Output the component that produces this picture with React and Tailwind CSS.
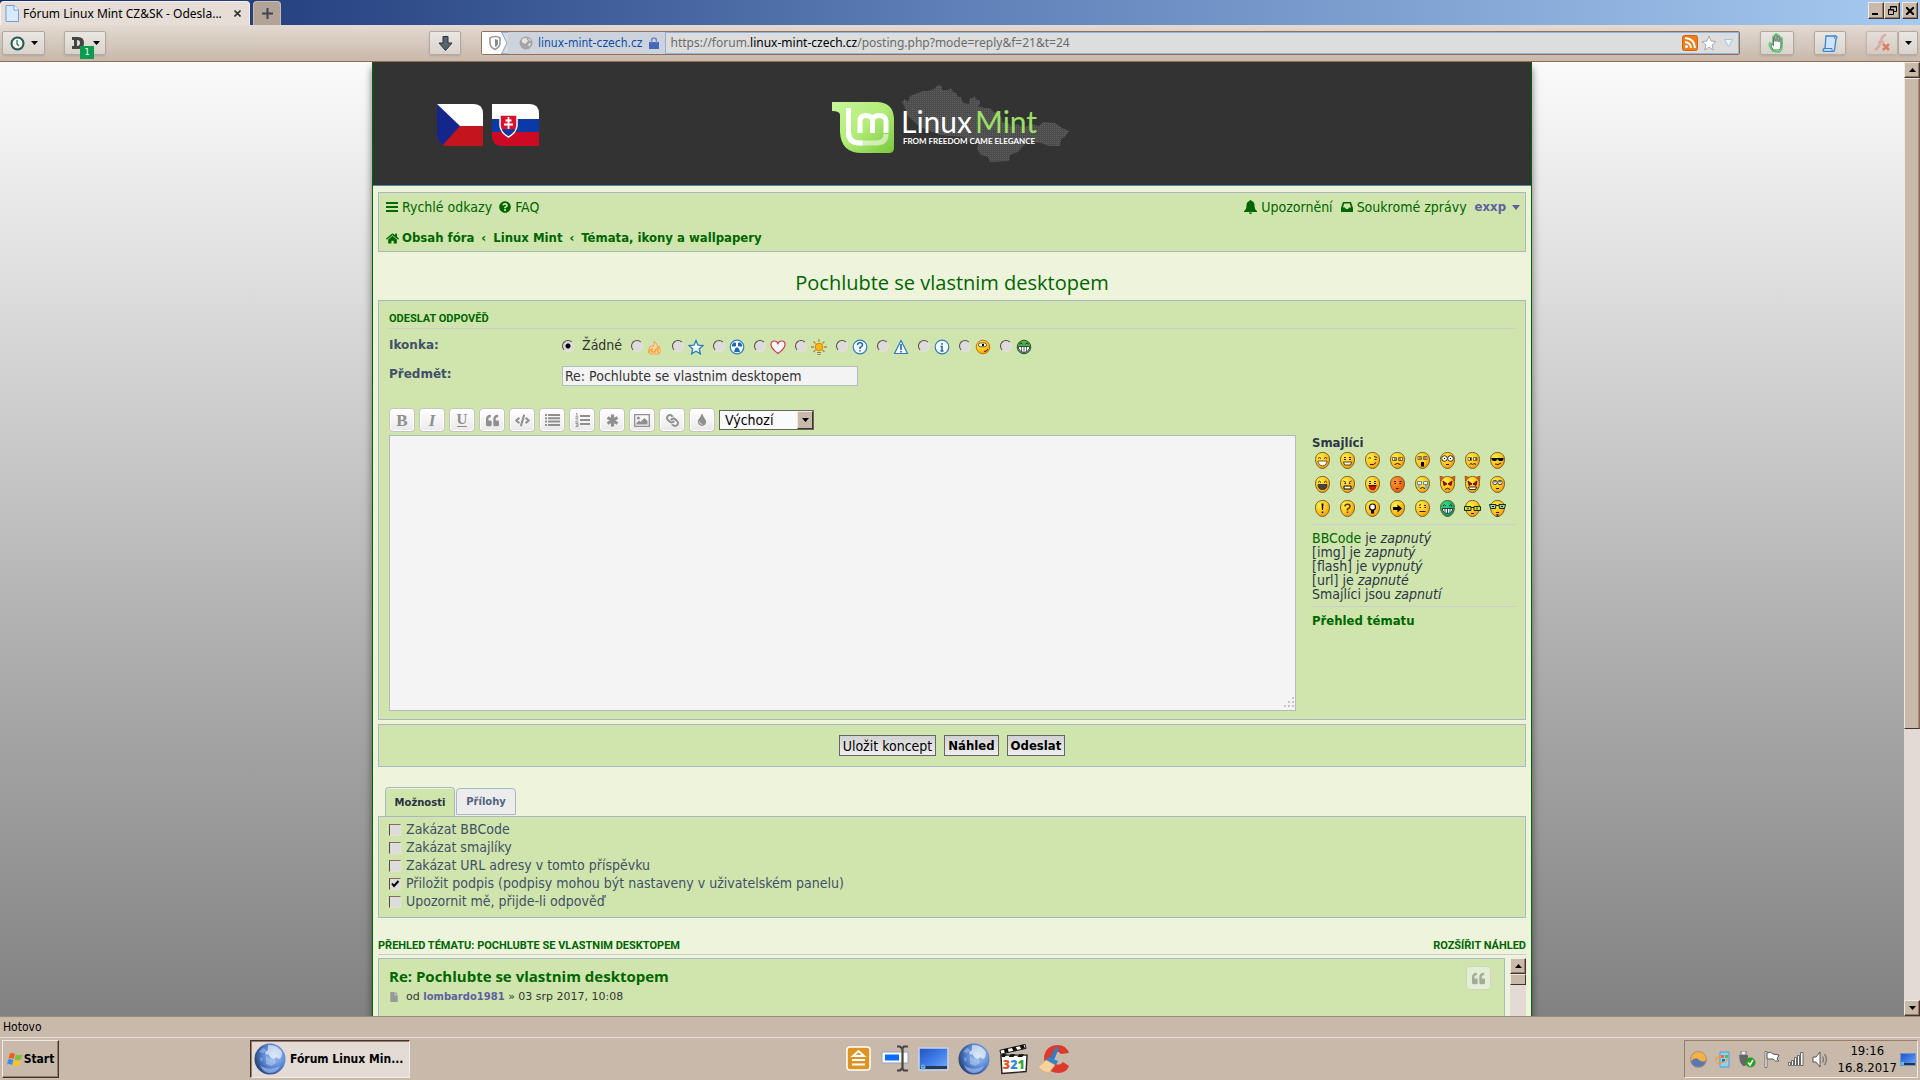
import { useState } from "react";
import { FaQuestionCircle, FaHome, FaQuoteLeft, FaCode, FaLink, FaTint, FaFile } from "react-icons/fa";

const TAHOMA = "font-['DejaVu_Sans_Condensed','DejaVu_Sans',sans-serif]";

const FORMAT_BUTTONS = [
  { name: "Tučné", icon: <b className="font-['Liberation_Serif',serif] text-[17px] leading-none">B</b> },
  { name: "Kurzíva", icon: <b className="font-['Liberation_Serif',serif] text-[17px] italic leading-none">I</b> },
  { name: "Podtržené", icon: <b className="border-b border-current font-['Liberation_Serif',serif] text-[15px] leading-[13px]">U</b> },
  { name: "Citace", icon: <FaQuoteLeft size={13} /> },
  { name: "Kód", icon: <FaCode size={15} /> },
  {
    name: "Seznam",
    icon: <svg width="15" height="12" viewBox="0 0 15 12"><path d="M0 0h2v2H0zM3 0h12v2H3zM0 3.300h2v2H0zM3 3.300h12v2H3zM0 6.600h2v2H0zM3 6.600h12v2H3zM0 10h2v2H0zM3 10h12v2H3z" fill="currentColor" /></svg>
  },
  {
    name: "Číslovaný seznam",
    icon: <svg width="15" height="14" viewBox="0 0 15 14"><path d="M5 2h10v2H5zM5 6h10v2H5zM5 10h10v2H5z" fill="currentColor" /><path d="M1 .500h1V4M.500 4h3M.500 5.500h2v1.500L.500 9h3M.500 10.500h2.500v3H.500M1 12h2" fill="none" stroke="currentColor" strokeWidth=".9" /></svg>
  },
  {
    name: "Položka seznamu",
    icon: <svg width="13" height="13" viewBox="0 0 13 13"><path d="M6.500 .500v12M1.500 3.500l10 6M11.500 3.500l-10 6" stroke="currentColor" strokeWidth="3.200" /></svg>
  },
  {
    name: "Obrázek",
    icon: <svg width="16" height="13" viewBox="0 0 16 13"><path d="M.700 .700h14.600v11.600H.700z" fill="none" stroke="currentColor" strokeWidth="1.300" /><circle cx="4.300" cy="4" r="1.500" fill="currentColor" /><path d="M2.500 10.500V9l2.500-2.500 1.500 1.500L10.500 4 13.500 7v3.500z" fill="currentColor" /></svg>
  },
  { name: "Odkaz", icon: <FaLink size={13} className="rotate-90" /> },
  { name: "Barva písma", icon: <FaTint size={12} /> }
];

const OPTIONS = [
  { id: "bbcode", label: "Zakázat BBCode" },
  { id: "smilies", label: "Zakázat smajlíky" },
  { id: "urls", label: "Zakázat URL adresy v tomto příspěvku" },
  { id: "sig", label: "Přiložit podpis (podpisy mohou být nastaveny v uživatelském panelu)", checked: true },
  { id: "notify", label: "Upozornit mě, přijde-li odpověď" }
];

const STATUS = [
  ["[img] je", "zapnutý"],
  ["[flash] je", "vypnutý"],
  ["[url] je", "zapnuté"],
  ["Smajlíci jsou", "zapnutí"]
];

const K = { fill: "none", stroke: "#2a1a00", strokeWidth: 1 };

// Facial features, drawn on a 15x17 face
const FEATURES = {
  grin: <><path {...K} d="M3 6.500Q4.500 4.500 6 6.500M9 6.500Q10.500 4.500 12 6.500" /><path d="M3 9h9v1q-1 4-4.500 4T3 10z" fill="#fff" stroke="#2a1a00" strokeWidth=".7" /></>,
  smile: <><path {...K} d="M4 5.500h2M9 5.500h2M4 7.500h2M9 7.500h2" /><path d="M3.500 10h8l-1 3h-6z" fill="#fff" stroke="#2a1a00" strokeWidth=".8" /></>,
  wink: <><path {...K} d="M3.500 6.500Q5 4.500 6 6.500M9 4.500l3 1M9.500 7.500h2M5 12.500q4 1 6-2" /></>,
  sad: <><path d="M2.500 5.500h4v3h-4zM8.500 5.500h4v3h-4z" fill="#fff" stroke="#6b4a10" strokeWidth=".8" /><path {...K} d="M5 6v2.500M10 6v2.500M4.500 12.500q3-2 6 0" /></>,
  shock: <><path d="M3 4.500h3.500v3H3zM8.500 4.500H12v3H8.500z" fill="#fff" stroke="#6b4a10" strokeWidth=".8" /><path {...K} d="M5 5v2M10 5v2" /><path d="M6 10h3v4.500H6z" fill="#000" /></>,
  eek: <><circle cx="4.500" cy="6.500" r="2.800" fill="#fff" stroke="#000" strokeWidth=".8" /><circle cx="10.500" cy="6.500" r="2.800" fill="#fff" stroke="#000" strokeWidth=".8" /><path d="M4 6h1v1H4zM10 6h1v1h-1z" /><path {...K} d="M6 12.500h3" /></>,
  confused: <><path d="M3 5.500h3.500v3H3zM8.500 5.500H12v3H8.500z" fill="#fff" stroke="#6b4a10" strokeWidth=".8" /><path d="M5 6h1v2H5zM10.500 6h1v2h-1z" /><path {...K} d="M4.500 12.500l1.500-1 1.500 1 1.500-1 2 1" /></>,
  cool: <><path d="M1.500 6h12v1.500l-1.500 1.500H9L8 7.500H7L6 9H3L1.500 7.500z" /><path {...K} d="M5 12q3 1.500 6-1" /></>,
  lol: <><path {...K} d="M3 6.500Q4.500 4 6 6.500M9 6.500Q10.500 4 12 6.500" /><path d="M3 8.500h9q0 5-4.500 5T3 8.500z" fill="#444" stroke="#2a1a00" strokeWidth=".7" /></>,
  mad: <><path {...K} d="M3.500 5l2.500 1.500M11.500 5L9 6.500M4.500 7.500h1.500M9 7.500h1.500" /><path d="M4 10h7v3H4z" fill="#fff" stroke="#000" /></>,
  razz: <><path {...K} d="M4 5.500h2M9 5.500h2M4 7.500h2M9 7.500h2M3.500 9.500h8" /><path d="M4 10h7q-.500 4-3.500 4T4 10z" fill="#e21212" stroke="#5a0000" strokeWidth=".6" /></>,
  red: <><path {...K} d="M4 5.500h2M9.500 5.500h2M4.500 7.500h1.500M9.500 7.500h1.500M6 12.500h2.500" /></>,
  cry: <><path d="M2.500 5.500h4v3h-4zM8.500 5.500h4v3h-4z" fill="#dff1ff" stroke="#4d7890" strokeWidth=".8" /><path d="M3 9h1.500v3H3zM10.500 9h2v4h-2z" fill="#63b4e8" /><path {...K} d="M5 12.500q2.500-2 5 0" /></>,
  evil: <><path d="M3 5l4 3-3 1.500zM12 5L8 8l3 1.500z" fill="#d00" stroke="#300" strokeWidth=".8" /><path {...K} d="M5 13.500q2.500-2.500 5 0" /></>,
  twisted: <><path d="M3 5l4 3-3 1.500zM12 5L8 8l3 1.500z" fill="#d00" stroke="#300" strokeWidth=".8" /><path d="M3.500 11h8l-1 2.500h-6z" fill="#fff" stroke="#000" strokeWidth=".8" /></>,
  roll: <><circle cx="5" cy="6.500" r="2.200" fill="#fff" stroke="#000" strokeWidth=".7" /><circle cx="10" cy="6.500" r="2.200" fill="#fff" stroke="#000" strokeWidth=".7" /><path d="M4.500 5h1v1.500h-1zM9.500 5h1v1.500h-1z" /><path {...K} d="M6 12.500h3" /></>,
  exclaim: <path d="M6.500 3.500h2L8 10H7zM6.700 11.500h1.600V13H6.700z" />,
  question: <><path d="M5 6.500Q5 4.300 7.500 4.300T10 6.500Q10 8 7.500 9v1.500" fill="none" stroke="#5a3c00" strokeWidth="1.600" /><path d="M6.700 11.500h1.600V13H6.700z" fill="#5a3c00" /></>,
  idea: <><circle cx="7.500" cy="7" r="3" fill="#fff" stroke="#000" strokeWidth="1.200" /><path d="M6 10h3v3.500H6z" /></>,
  arrow: <path d="M3 7h4.500V4.500l4.500 4-4.500 4V10H3z" />,
  neutral: <><path {...K} d="M4 5.500l2-1M9 5.500h2M4.500 7.500h1.500M9.500 7.500h1.500M4.500 11.500h6" /></>,
  green: <><path d="M3 6Q4.500 3.500 6 6M9 6Q10.500 3.500 12 6" fill="none" stroke="#022" /><path d="M2.500 8.500h10v1.500q-1 3.500-5 3.500T2.500 10z" fill="#fff" stroke="#022" strokeWidth=".8" /><path d="M5 8.500v4M7.500 8.500v5M10 8.500v4" stroke="#022" strokeWidth=".8" /></>,
  geek: <><path d="M-.500 6.500h6.500v4h-6.500zM9 6.500h6.500v4H9z" fill="#bfe04a" stroke="#1d2a00" /><path {...K} d="M6 7.500h3M3 7.500v2M12 7.500v2M6 13.500h3" /></>,
  ugeek: <><path d="M-.500 4.500h6.500l-.500 4h-5zM9 4.500h6.500l-1 4h-5z" fill="#9bd3b4" stroke="#0b2a1c" /><path {...K} d="M6 5.500h3M2 6.500h2M11 6.500h2M6 12.500h3" /><path d="M6.500 14h2v3h-2z" fill="#4a3a1a" /></>
};

const SMILIES = Object.keys(FEATURES);

function Smiley({ kind }) {
  const fill = kind === "green" ? "url(#faceGreen)" : kind === "red" ? "url(#faceRed)" : "url(#faceYellow)";
  const horns = kind === "evil" || kind === "twisted";
  return (
    <svg width="19" height="17" viewBox="-2 0 19 17">
      <path d="M7.500 .500C12 .500 14.500 3.500 14.500 7.500 14.500 12 11.500 16.500 7.500 16.500S.500 12 .500 7.500C.500 3.500 3 .500 7.500 .500z" fill={fill} stroke="#6d5320" strokeWidth=".9" />
      {horns && <path d="M0 0l4 1.500L.500 5zM15 0l-4 1.500L14.500 5z" fill="#e8641c" stroke="#7a3000" strokeWidth=".6" />}
      {FEATURES[kind]}
    </svg>
  );
}

const TOPIC_ICONS = {
  fire: <><path d="M2 10q0-3 3-3 1 0 1 1 2-3 1-6 4 3 3.500 6l1.500-1q3 5 0 8H3Q1 13 2 10z" fill="#fbd9a8" stroke="#f2a04e" /><path d="M2 14q0-3 3-4v3h3q0-3 3-4-1 3 1 5" fill="none" stroke="#f4a63c" strokeWidth="1.500" /></>,
  star: <path d="M8 1.500l2 4.700 5 .400-3.800 3.300 1.200 5L8 12.200l-4.400 2.700 1.200-5L1 6.600l5-.400z" fill="#f4faff" stroke="#2f7cc4" strokeWidth="1.300" />,
  nuke: <><circle cx="8" cy="8" r="6.800" fill="#f4faff" stroke="#2f7cc4" strokeWidth="1.200" /><path d="M4.500 4h2v3h-3.500zM9.500 4h2l1.500 3H9.500zM7 9h2l1.500 3.500h-5z" fill="#1d68b0" stroke="#1d68b0" /></>,
  heart: <path d="M8 14.500Q1 9.500 1 5.500 1 2 4.300 2 7 2 8 4.500 9 2 11.700 2 15 2 15 5.500q0 4-7 9z" fill="#fff4f6" stroke="#c43a5a" strokeWidth="1.200" />,
  sun: <><path d="M8 0v3M0 8h3M13 8h3M2.500 2.500l2 2M13.500 2.500l-2 2M2.500 13l2-2M13.500 13l-2-2" stroke="#b08a3a" strokeWidth="1.300" /><circle cx="8" cy="8" r="3.800" fill="#ffb516" stroke="#d98300" /><path d="M6 13.500h4M6.500 15.500h3" stroke="#8c7a5a" /></>,
  ask: <><circle cx="8" cy="8" r="6.800" fill="#f4faff" stroke="#2f7cc4" strokeWidth="1.200" /><path d="M5.500 6Q5.500 3.800 8 3.800T10.500 6Q10.500 7.500 8 8.500v1.500M8 11v1.500" fill="none" stroke="#1d68b0" strokeWidth="1.500" /></>,
  warn: <><path d="M8 1.500l6.500 13h-13z" fill="#f4faff" stroke="#2f7cc4" strokeWidth="1.200" /><path d="M8 5v6M8 12v1.500" stroke="#1d68b0" strokeWidth="1.600" /></>,
  info: <><circle cx="8" cy="8" r="6.800" fill="#f4faff" stroke="#2f7cc4" strokeWidth="1.200" /><path d="M8 4v1.700M6.500 7.500H8V12M6.500 12h3" fill="none" stroke="#1d68b0" strokeWidth="1.500" /></>,
  cyclops: <><circle cx="8" cy="8" r="6.800" fill="url(#faceYellow)" stroke="#c07a00" /><rect x="3.500" y="4" width="8" height="3.800" rx="1.900" fill="#fff" stroke="#333" strokeWidth=".8" /><path d="M7 5h2v2H7z" /><path d="M9 12.500q3 0 4-2.500" stroke="#402000" fill="none" /></>,
  toothy: <><circle cx="8" cy="8" r="6.800" fill="#4fb04a" stroke="#2c5a2a" /><path d="M3.500 5Q5 3 6.500 5M9.500 5Q11 3 12.500 5" fill="none" stroke="#113a11" /><path d="M2.500 7.500h11v2q-2 4-5.500 4T2.500 9.500z" fill="#fff" stroke="#223" strokeWidth=".8" /><path d="M5.500 7.500v5M8 7.500v6M10.500 7.500v5" stroke="#223" strokeWidth=".7" /></>
};

function Globe({ className }) {
  return (
    <svg className={className} viewBox="0 0 32 32">
      <circle cx="16" cy="16" r="15.500" fill="url(#globe)" />
      <path d="M14 2q9-1 14 7 0 6-3 7l-3-2-2 2-3-1-3-4-2 1-1-3 3-2z" fill="#fff" opacity=".6" />
      <path d="M12 13l4 3 4 0 2 4-5 3-5-2zM5 9l4-4 3 2-3 3zM6 14l3 2-2 3z" fill="#cfe0f8" opacity=".4" />
      <path d="M6 22q9 7 20 1-3 7-10 7T6 22z" fill="#a8c8ff" opacity=".6" />
    </svg>
  );
}

function Arrow({ up = false }) {
  return (
    <svg width="7" height="4" viewBox="0 0 7 4">
      <path d={up ? "M0 4h7L3.500 0z" : "M0 0h7L3.500 4z"} />
    </svg>
  );
}

function ClassicButton({ label, className, children }) {
  return (
    <button
      aria-label={label}
      className={`flex items-center justify-center bg-[#c9b9aa] border border-t-[#efe9e4] border-l-[#efe9e4] border-b-[#3f3430] border-r-[#3f3430] shadow-[inset_-1px_-1px_0_#9b7b63] ${className}`}
    >
      {children}
    </button>
  );
}

function ToolButton({ label, className, children }) {
  return (
    <button
      aria-label={label}
      className={`flex h-6 items-center justify-center rounded-[2px] border border-[#b3aaa2] bg-linear-to-b from-[#ebe7e3] to-[#d9d2cc] shadow-sm ${className}`}
    >
      {children}
    </button>
  );
}

function TitleBar() {
  return (
    <div className="flex h-[25px] shrink-0 items-end justify-between bg-linear-to-r from-[#132a6b] via-[#5f80b8] to-[#a6caf0]">
      <div className="flex items-end gap-[3px]">
        <div className="flex h-6 w-[250px] items-center rounded-t-[4px] border border-b-0 border-[#f6f2ef] bg-[#e5ddd6] pl-1 pr-2 text-black">
          <svg width="14" height="17" viewBox="0 0 14 17" className="mr-1">
            <path d="M1 .500h8l4.500 4.500v11.500H1z" fill="#d8eaff" stroke="#6fa0d0" />
            <path d="M9 .500V5h4.500" fill="#fff" stroke="#6fa0d0" />
          </svg>
          <span className="flex-1 truncate font-['Noto_Sans',sans-serif] text-[12px] leading-5">Fórum Linux Mint CZ&amp;SK - Odesla...</span>
          <button aria-label="Zavřít panel">
            <svg width="7" height="7" viewBox="0 0 7 7"><path d="M.500 .500l6 6M6.500 .500l-6 6" stroke="#333" strokeWidth="1.600" /></svg>
          </button>
        </div>
        <button aria-label="Nový panel" className="flex h-6 w-7 items-center justify-center rounded-t-[4px] border border-b-0 border-[#c9bcb2] bg-[#b3a396]">
          <svg width="11" height="11" viewBox="0 0 11 11"><path d="M5.500 0v11M0 5.500h11" stroke="#3c4650" strokeWidth="2" /></svg>
        </button>
      </div>
      <div className="flex h-full items-start pr-[2px] pt-[2px]">
        <ClassicButton label="Minimalizovat" className="h-[17px] w-4"><svg width="8" height="9"><path d="M0 7h6v2H0z" /></svg></ClassicButton>
        <ClassicButton label="Obnovit" className="h-[17px] w-4">
          <svg width="9" height="9" viewBox="0 0 9 9" fill="none" stroke="#000"><path d="M2.500 3V.500h6v5H6M2.500 1h6M.500 3.500h5v5h-5zM.500 4h5" /></svg>
        </ClassicButton>
        <ClassicButton label="Zavřít" className="ml-[2px] h-[17px] w-4"><svg width="8" height="8"><path d="M0 0l8 8M8 0L0 8" stroke="#000" strokeWidth="2" /></svg></ClassicButton>
      </div>
    </div>
  );
}

function BrowserToolbar() {
  return (
    <div className={`flex h-[37px] shrink-0 items-center border-b border-[#937055] bg-linear-to-b from-[#e3dad3] to-[#c9b8aa] pl-[2px] pr-[2px] text-[12px] ${TAHOMA}`}>
      <ToolButton label="Historie" className="w-[43px] gap-[6px]">
        <svg width="15" height="15" viewBox="0 0 15 15"><circle cx="7.500" cy="7.500" r="6" fill="#f4f4f2" stroke="#245a4c" strokeWidth="2" /><path d="M7 4v4l2 2" fill="none" stroke="#2a7a5a" strokeWidth="1.300" /></svg>
        <Arrow />
      </ToolButton>
      <ToolButton label="Blokování" className="relative ml-[19px] w-[42px] justify-start gap-2 pl-[7px]">
        <svg width="13" height="14" viewBox="0 0 13 14"><path d="M0 1h6q6 0 6 6t-6 6H0v-3h2V4H0zM5 4v6q3 0 3-3T5 4z" fill="#444" /></svg>
        <Arrow />
        <span className="absolute left-[15px] top-[14px] h-[13px] w-[14px] bg-[#0c9c50] text-[9px] leading-[13px] text-white">1</span>
      </ToolButton>
      <ToolButton label="Stahování" className="ml-[323px] w-8">
        <svg width="15" height="15" viewBox="0 0 15 15"><path d="M5 .500h5V7h4l-6.500 7.500L1 7h4z" fill="#56646f" stroke="#28323a" /></svg>
      </ToolButton>
      <div className="ml-5 flex h-6 min-w-0 flex-1 items-center rounded-[2px] border border-[#92705a] bg-[#dddddd] shadow-[inset_0_0_0_1px_#8fb4de]">
        <svg width="26" height="22" viewBox="0 0 26 22" className="shrink-0">
          <path d="M0 0h19l6 11-6 11H0z" fill="#fff" />
          <path d="M19.500 0l5.500 11-5.500 11" fill="none" stroke="#8ca0b8" />
          <path d="M13 4.500q3 0 5 1.500v5q0 4-5 6.500-5-2.500-5-6.500V6q2-1.500 5-1.500z" fill="none" stroke="#999" strokeWidth="1.600" />
          <path d="M13 7l3 1v3q0 3-3 4z" fill="#888" />
        </svg>
        <div className="flex h-[22px] items-center border-r border-[#8fb0dc] bg-[#cdd3dc] pl-[11px] pr-[6px]">
          <svg width="14" height="14" viewBox="0 0 14 14" className="mr-[5px]"><circle cx="7" cy="7" r="6.500" fill="#a4a4a4" /><path d="M3 3l4-1 2 3-3 3-3-2zM9 8l3-1-2 4zM8 2l4 2-1 1z" fill="#e6e6e6" /></svg>
          <span className="text-[#0b4ba8]">linux-mint-czech.cz</span>
          <svg width="10" height="12" viewBox="0 0 10 12" className="ml-[6px]"><path d="M0 5h10v7H0z" fill="#4668b8" /><path d="M2.500 6V3.500q0-2.500 2.500-2.500t2.500 2.500V6" fill="none" stroke="#6f8ac8" strokeWidth="1.500" /></svg>
        </div>
        <div className="relative min-w-0 flex-1 font-['Noto_Sans',sans-serif] leading-5">
          {/* the domain is highlighted under a see-through input */}
          <div aria-hidden="true" className="truncate pl-[5px] text-[#6b6b6b]">
            https://forum.<span className="text-black">linux-mint-czech.cz</span>/posting.php?mode=reply&amp;f=21&amp;t=24
          </div>
          <input aria-label="Adresa" className="absolute inset-0 w-full bg-transparent pl-[5px] opacity-0" />
        </div>
        <svg width="16" height="16" viewBox="0 0 16 16"><rect x=".500" y=".500" width="15" height="15" rx="2" fill="#ee7d1a" stroke="#cc6510" /><path d="M3 3q9.500 .500 10 10M3 7q5.500 .500 6 6" fill="none" stroke="#fff" strokeWidth="2" /><circle cx="4.500" cy="11.500" r="1.500" fill="#fff" /></svg>
        <svg width="16" height="16" viewBox="0 0 16 16" className="ml-[3px]"><path d="M8 1l2 5 5 .500-4 3.500 1.500 5L8 12.200 3.500 15 5 10 1 6.500 6 6z" fill="#fff" stroke="#aaa" /></svg>
        <svg width="9" height="8" viewBox="0 0 9 8" className="ml-[7px] mr-[6px]"><path d="M.500 .500h8l-4 7z" fill="#eef4fb" stroke="#a5c4e4" /></svg>
      </div>
      <ToolButton label="Blokátor" className="ml-5 w-[34px]">
        <svg width="18" height="20" viewBox="0 0 18 20"><path d="M5 18q-5-6-3-8l3 2V4q1-2 2 0V2q1-2 2.500 0v1q2-1 2 1v1q2-1 2.500 1v7q0 4-3 6z" fill="#f5f5f5" stroke="#62cf72" strokeWidth="2" /><path d="M5.500 17q-3.500-5-2-6l2 1.500V5q1-1 1.500 0v3.500V3q1-1 2 0v5.500V4q1-1 2 0v5V6q1-1 1.800 0v7q0 3-1.800 4z" fill="#f8f8f8" stroke="#555" strokeWidth=".8" /></svg>
      </ToolButton>
      <ToolButton label="Skripty" className="ml-5 w-8">
        <svg width="16" height="17" viewBox="0 0 16 17"><path d="M4 1h10q2 1 0 3l-1.500 11q0 1.500-2 1.500H2q-2-1 0-3h1z" fill="#cfe5ff" stroke="#3f83c8" strokeWidth="1.300" /><path d="M13 1q-1 1 0 3M2 13.500h8v3" fill="none" stroke="#3f83c8" /></svg>
      </ToolButton>
      <ToolButton label="Flash" className="ml-5 w-8 opacity-60">
        <svg width="17" height="18" viewBox="0 0 17 18"><path d="M12 1Q8 1 7 7T1 16M4 8h6" fill="none" stroke="#d99a90" strokeWidth="2.500" /><path d="M9 10l6 6M15 10l-6 6" stroke="#e4502e" strokeWidth="2.500" /></svg>
      </ToolButton>
      <ToolButton label="Další" className="w-5"><Arrow /></ToolButton>
    </div>
  );
}

function Flags() {
  return (
    <svg width="104" height="46" viewBox="0 0 104 46">
      <defs>
        <clipPath id="czClip"><path d="M0 2h37q9 0 9 10v32H11Q1 44 0 34z" /></clipPath>
        <clipPath id="skClip"><path d="M55 2h38q9 0 9 10v32H66q-11 0-11-10z" /></clipPath>
      </defs>
      <g clipPath="url(#czClip)">
        <path d="M0 0h47v24H0z" fill="#fff" />
        <path d="M0 24h47v22H0z" fill="#c3151b" />
        <path d="M0 2l23 22L3 46H0z" fill="#14268c" />
      </g>
      <g clipPath="url(#skClip)">
        <path d="M55 0h48v17H55z" fill="#fff" />
        <path d="M55 17h48v13H55z" fill="#0a3aa6" />
        <path d="M55 30h48v16H55z" fill="#cc0a24" />
        <path d="M63 13h17v11q-1 7-8.500 11Q64 31 63 24z" fill="#d8122c" stroke="#fff" strokeWidth="1.500" />
        <path d="M65 28q2-2 4 0 2.500-3 5 0 2-2 4 0-3 4-6.500 6-4-2-6.500-6z" fill="#0a3aa6" />
        <path d="M71.500 15v12M68.500 18.500h6M67 22.500h9" stroke="#fff" strokeWidth="1.800" />
      </g>
    </svg>
  );
}

function Logo() {
  return (
    <svg width="242" height="82" viewBox="10 8 242 82">
      <defs>
        <linearGradient id="mint" x1="0" y1="0" x2="1" y2="1">
          <stop offset="0" stopColor="#c8f59a" />
          <stop offset=".5" stopColor="#b2ec78" />
          <stop offset="1" stopColor="#78c83c" />
        </linearGradient>
        <pattern id="dots" width="2" height="2" patternUnits="userSpaceOnUse">
          <path d="M0 0h2v2H0z" fill="#4c4c4c" />
          <path d="M0 0h1v1H0z" fill="#606060" />
        </pattern>
      </defs>
      <path
        d="M82 27L85 24 88 27 90 21 98 18 103 16 108 16 114 14 118 10 122 11 122 15 128 15 131 13 133 17 136 18 138 22 141 22 143 28 149 29 150 23 153 23 154 21 157 25 160 25 160 29 158 31 164 33 170 33 173 37 178 38 182 43 182 47 190 49 191 52 197 49 204 53 211 49 219 51 223 47 235 48 242 53 249 56 245 62 241 64 240 71 229 71 221 68 210 66 204 70 198 77 190 80 189 86 170 87 168 82 161 80 157 74 158 68 142 62 120 60 100 52 88 41 85 33z"
        fill="url(#dots)"
      />
      <path d="M12 27h46q15 1 16 16v30q0 5-5 5H42q-21 0-22-21V40q0-4-8-4z" fill="url(#mint)" />
      <path d="M28.500 33v24q0 11 11 11H56q10 0 10-9" fill="none" stroke="#fff" strokeWidth="5" opacity=".55" />
      <path d="M28.500 33v24q0 11 11 11h3M40 58V46q0-5.500 6-5.500t6.500 5.500v12M52.500 46q0-5.500 6.500-5.500t7 5.500v12" fill="none" stroke="#fff" strokeWidth="5" />
      <text x="81" y="58" fill="#fff" fontFamily="Lato, sans-serif" fontSize="30">Linux</text>
      <text x="155" y="58" fill="#9be064" fontFamily="Lato, sans-serif" fontSize="30">Mint</text>
      <text x="83" y="69" fill="#fff" fontFamily="Lato, sans-serif" fontWeight="700" fontSize="8">FROM FREEDOM CAME ELEGANCE</text>
    </svg>
  );
}

function NavBar() {
  return (
    <nav className="border border-[#a9b8c2] bg-[#cfe5ad] pb-1 pl-[7px] pr-[5px] pt-[5px] text-[#006600]">
      <div className={`flex justify-between text-[14px] leading-[18px] ${TAHOMA}`}>
        <div className="flex items-center gap-[7px]">
          <a href="#" className="flex items-center gap-1">
            <svg width="12" height="10" viewBox="0 0 12 10"><path d="M0 0h12v2H0zM0 4h12v2H0zM0 8h12v2H0z" fill="currentColor" /></svg>
            Rychlé odkazy
          </a>
          <a href="#" className="flex items-center gap-1"><FaQuestionCircle size={12} />FAQ</a>
        </div>
        <div className="flex items-center gap-2">
          <a href="#" className="flex items-center gap-1">
            <svg width="13" height="14" viewBox="0 0 13 14"><path d="M6.500 0q1 0 1 1 3 .500 3 4.500 0 4 2.500 5.500v1H0v-1q2.500-1.500 2.500-5.500 0-4 3-4.500 0-1 1-1zM5 12.500h3q0 1.500-1.500 1.500T5 12.500z" fill="currentColor" /></svg>
            Upozornění
          </a>
          <a href="#" className="flex items-center gap-1">
            <svg width="12" height="10" viewBox="0 0 12 10"><path fillRule="evenodd" d="M2 0h8l2 6v4H0V6zM3.200 1.600L2 5.500h2L5 7h2l1-1.500h2L8.800 1.600z" fill="currentColor" /></svg>
            Soukromé zprávy
          </a>
          <a href="#" className="flex items-center gap-[6px] text-[13px] font-bold text-[#5f5fa0]">
            exxp
            <svg width="8" height="5" viewBox="0 0 8 5"><path d="M0 0h8L4 5z" fill="#5f5fa0" /></svg>
          </a>
        </div>
      </div>
      <div className={`mt-[13px] flex items-center gap-[7px] text-[13px] font-bold leading-[18px] ${TAHOMA}`}>
        <a href="#" className="flex items-center gap-[3px]"><FaHome size={13} />Obsah fóra</a>
        <span>‹</span>
        <a href="#">Linux Mint</a>
        <span>‹</span>
        <a href="#">Témata, ikony a wallpapery</a>
      </div>
    </nav>
  );
}

const RADIO = "size-3 appearance-none rounded-full border border-t-[#5b4840] border-l-[#5b4840] border-b-[#e9e0d8] border-r-[#e9e0d8] bg-[#dcdcdc] checked:bg-[radial-gradient(circle,#000_2px,#dcdcdc_3px)]";

function PostingPanel() {
  const [icon, setIcon] = useState("none");
  return (
    <section className="border border-[#a9b8c2] bg-[#cfe5ad] px-[10px] pb-2 pt-[10px]">
      <h3 className="border-b border-[#cccccc] pb-px font-[Roboto,sans-serif] text-[11px] font-bold uppercase leading-4 text-[#006600]">Odeslat odpověď</h3>

      <div className="mt-2 flex items-center font-['DejaVu_Sans',sans-serif]">
        <span className="w-[173px] text-[12px] font-bold leading-[17px] text-[#425067]">Ikonka:</span>
        <div role="radiogroup" aria-label="Ikonka" className="flex h-[17px] items-center">
          <label className={`flex items-center gap-2 text-[14px] leading-[17px] text-[#333] ${TAHOMA}`}>
            <input type="radio" name="icon" checked={icon === "none"} onChange={() => setIcon("none")} className={RADIO} />
            Žádné
          </label>
          <div className="ml-[9px] flex gap-[9px]">
            {Object.entries(TOPIC_ICONS).map(([key, art]) => (
              <label key={key} className="flex items-center gap-1">
                <input type="radio" name="icon" aria-label={key} checked={icon === key} onChange={() => setIcon(key)} className={RADIO} />
                <svg width="16" height="16" viewBox="0 0 16 16" className="mt-[2px]">{art}</svg>
              </label>
            ))}
          </div>
        </div>
      </div>

      <div className="mt-3 flex items-start">
        <label htmlFor="subject" className="w-[173px] font-['DejaVu_Sans',sans-serif] text-[12px] font-bold leading-[17px] text-[#425067]">Předmět:</label>
        <input
          id="subject"
          defaultValue="Re: Pochlubte se vlastnim desktopem"
          className={`h-5 w-[296px] border border-[#b4bac0] bg-[#f3f3f3] px-[2px] text-[14px] text-[#333] ${TAHOMA}`}
        />
      </div>

      <div className="mt-[22px] flex items-center gap-1">
        {FORMAT_BUTTONS.map(({ name, icon: glyph }) => (
          <button key={name} aria-label={name} className="flex h-6 w-[26px] items-center justify-center rounded-[4px] border border-[#c7c3bf] bg-linear-to-b from-white to-[#e9e9e9] text-[#8f8f8f] shadow-[inset_0_0_0_1px_#fff]">
            {glyph}
          </button>
        ))}
        <div className="relative flex">
          <select aria-label="Velikost písma" className={`h-5 w-[95px] appearance-none border border-[#666] bg-[#fafafa] pl-[5px] text-[14px] leading-[18px] text-black ${TAHOMA}`}>
            <option>Výchozí</option>
          </select>
          <span className="pointer-events-none absolute right-px top-px flex h-[18px] w-4 items-center justify-center border border-b-[#3f3430] border-l-[#efe9e4] border-r-[#3f3430] border-t-[#efe9e4] bg-[#c9b9aa]">
            <Arrow />
          </span>
        </div>
      </div>

      <div className="mt-[3px] flex gap-4">
        <div className="relative flex min-w-0 flex-1">
          <textarea aria-label="Zpráva" className="h-[276px] w-full resize-none border border-[#b4bac0] bg-[#f4f4f4]" />
          <svg width="12" height="12" viewBox="0 0 12 12" className="absolute bottom-[2px] right-px">
            <path d="M9 0h2v2H9zM5 4h2v2H5zM9 4h2v2H9zM1 8h2v2H1zM5 8h2v2H5zM9 8h2v2H9z" fill="#c4c4c4" />
          </svg>
        </div>
        <aside className={`w-[203px] pt-px text-[14px] leading-[14px] text-[#2c3547] ${TAHOMA}`}>
          <h4 className="text-[13px] font-bold leading-[14px]">Smajlíci</h4>
          <div className="mt-[2px] grid w-[200px] grid-cols-8 gap-y-[7px]">
            {SMILIES.map((kind) => (
              <button key={kind} aria-label={kind} className="flex pl-px"><Smiley kind={kind} /></button>
            ))}
          </div>
          <hr className="mb-[6px] mt-[7px] border-[#cccccc]" />
          <p><a href="#" className="text-[#006600]">BBCode</a> je <em>zapnutý</em></p>
          {STATUS.map(([what, state]) => (
            <p key={what}>{what} <em>{state}</em></p>
          ))}
          <hr className="mb-[7px] mt-[5px] border-[#cccccc]" />
          <a href="#" className="block text-[13px] font-bold text-[#006600]">Přehled tématu</a>
        </aside>
      </div>
    </section>
  );
}

const SUBMIT = "h-[21px] border border-[#666] bg-linear-to-b from-[#d2d2d2] to-[#efefef] px-[3px] leading-[18px] text-black";

function Options() {
  return (
    <>
      <div className="ml-[7px] mt-5 flex items-start gap-px font-['DejaVu_Sans',sans-serif] text-[10px] font-bold">
        <button className="h-[29px] w-[70px] rounded-t-[4px] border border-b-0 border-[#a9b8c2] bg-[#cfe5ad] text-center text-[#28313f] shadow-[inset_0_1px_0_#e6f4d4]">Možnosti</button>
        <button className="mt-px h-[27px] w-[60px] rounded-t-[4px] border border-[#a9b8c2] bg-[#ececec] text-[#536482]">Přílohy</button>
      </div>
      <section className={`border border-[#a9b8c2] bg-[#cfe5ad] px-[10px] pb-[7px] pt-[3px] text-[14px] leading-[18px] text-[#425067] ${TAHOMA}`}>
        {OPTIONS.map((opt) => (
          <div key={opt.id} className="flex items-center gap-[5px]">
            <span className="relative mt-[2px] flex size-3">
              <input
                id={opt.id}
                type="checkbox"
                defaultChecked={opt.checked}
                className="peer size-3 appearance-none border border-b-[#e9ddd4] border-l-[#5b4840] border-r-[#e9ddd4] border-t-[#8a6a58] bg-[#dcdcdc]"
              />
              <svg viewBox="0 0 12 12" className="pointer-events-none absolute inset-0 hidden size-3 peer-checked:block">
                <path d="M3 5.500l2 2.500 4.500-5" fill="none" stroke="#000" strokeWidth="2" />
              </svg>
            </span>
            <label htmlFor={opt.id}>{opt.label}</label>
          </div>
        ))}
      </section>
    </>
  );
}

function TopicReview() {
  return (
    <>
      <div className="mt-[20px] flex justify-between border-b border-[#cccccc] font-[Roboto,sans-serif] text-[11px] font-bold uppercase leading-4 text-[#006600]">
        <h3>Přehled tématu: Pochlubte se vlastnim desktopem</h3>
        <a href="#">Rozšířit náhled</a>
      </div>
      <div className="mt-[3px] flex gap-[5px]">
        <article className="flex h-[200px] flex-1 items-start justify-between border border-[#a9b8c2] bg-[#cfe5ad] pl-[10px] pr-[13px] pt-[6px]">
          <div>
            <h3 className="font-['Open_Sans',sans-serif] text-[15px] font-bold leading-[22px] text-[#006600]"><a href="#">Re: Pochlubte se vlastnim desktopem</a></h3>
            <p className="mt-[2px] flex items-center font-['DejaVu_Sans',sans-serif] text-[11px] leading-4 text-[#333]">
              <FaFile size={10} className="mr-[7px] text-[#999]" />
              <span>od <a href="#" className="text-[10px] font-bold text-[#5f5fa0]">lombardo1981</a> » 03 srp 2017, 10:08</span>
            </p>
          </div>
          <button aria-label="Citovat" className="mt-px flex h-6 w-[25px] items-center justify-center rounded-[4px] border border-[#cfd6c2] bg-[#e4eed5] text-[#a3ac98]">
            <FaQuoteLeft size={13} />
          </button>
        </article>
        <div className="flex w-4 flex-col bg-[#e3dad5]">
          <ClassicButton label="Nahoru" className="h-4 w-4"><Arrow up /></ClassicButton>
          <div className="h-[11px] border border-b-[#3f3430] border-l-[#efe9e4] border-r-[#3f3430] border-t-[#efe9e4] bg-[#c9b9aa]" />
        </div>
      </div>
    </>
  );
}

function ForumPage() {
  return (
    <main className="mx-auto h-full w-full max-w-[1160px] border-x border-[#006600] bg-[#eef3dc] shadow-[0_6px_8px_rgba(0,0,0,0.5)]">
      <header className="grid h-[124px] grid-cols-[1fr_auto_1fr] items-start border-b border-[#4b86a8] bg-[#333333]">
        <div className="pl-16 pt-10"><Flags /></div>
        <div className="pr-[3px] pt-[21px]"><Logo /></div>
      </header>
      <div className="px-[5px] pt-[6px]">
        <NavBar />
        <h2 className="mb-[3px] mt-[17px] text-center font-['Open_Sans',sans-serif] text-[20px] leading-[28px] text-[#006600]"><a href="#">Pochlubte se vlastnim desktopem</a></h2>
        <PostingPanel />
        <div className={`mt-1 flex justify-center gap-2 border border-[#a9b8c2] bg-[#cfe5ad] py-[10px] text-[13px] ${TAHOMA}`}>
          <button className={`${SUBMIT} text-[14px]`}>Uložit koncept</button>
          <button className={`${SUBMIT} font-bold`}>Náhled</button>
          <button className={`${SUBMIT} font-bold`}>Odeslat</button>
        </div>
        <Options />
        <TopicReview />
      </div>
    </main>
  );
}

function PageScrollbar() {
  return (
    <div className="flex w-4 shrink-0 flex-col bg-[#e3dad5]">
      <ClassicButton label="Posunout nahoru" className="h-4 w-4"><Arrow up /></ClassicButton>
      <div className="flex-[650] border border-b-[#3f3430] border-l-[#efe9e4] border-r-[#8a6a50] border-t-[#efe9e4] bg-[#c9b9aa] shadow-[inset_-1px_0_0_#a78d78]" />
      <div className="flex-[272]" />
      <ClassicButton label="Posunout dolů" className="h-4 w-4"><Arrow /></ClassicButton>
    </div>
  );
}

function Taskbar() {
  return (
    <footer className={`grid h-[42px] shrink-0 grid-cols-[1fr_auto_1fr] items-start bg-[#c9b9aa] px-[2px] pt-[2px] text-[13px] text-black ${TAHOMA}`}>
      <div className="flex">
        <ClassicButton label="Start" className="h-[38px] w-[57px] gap-px text-[12px] font-bold">
          <svg width="16" height="15" viewBox="0 0 16 15">
            <path d="M3 1.500Q5 .500 8 2L6.500 7Q4 5.500 1.500 6.500z" fill="#f05a1e" />
            <path d="M9 2.500q3 1.500 6.500 0L14 7.500q-3 1.500-6.500 0z" fill="#7cc241" />
            <path d="M1.200 7.500q2.500-1 5 .500L5 13q-2.500-1.500-5-.500z" fill="#3f8ee0" />
            <path d="M7.200 8.500q3 1.500 6.500 0L12 13.500q-3 1-6-.500z" fill="#fcc419" />
          </svg>
          Start
        </ClassicButton>
        <button className="ml-[191px] flex h-[38px] w-[160px] items-center gap-1 border border-b-[#efe9e4] border-l-[#3f3430] border-r-[#efe9e4] border-t-[#3f3430] bg-[#e3dbd4] pl-[3px] text-[12px] font-bold shadow-[inset_1px_1px_0_#9b7b63]">
          <Globe className="size-8" />
          Fórum Linux Min...
        </button>
      </div>
      <div className="flex h-[38px] items-center gap-[9px] pr-1">
        <svg width="26" height="26" viewBox="0 0 26 26"><rect x="1" y="1" width="23" height="23" rx="3" fill="#dd9422" stroke="#fff" strokeWidth="1.500" /><path d="M7 10h11l-5.500-5zM6 14h13M6 18.500h13" fill="none" stroke="#fff" strokeWidth="2" /></svg>
        <svg width="28" height="28" viewBox="0 0 28 28"><path d="M1 7h26v11H1z" fill="#fff" stroke="#8da0c0" /><path d="M4 9.500h14v6H4z" fill="#0a6cff" /><path d="M16 1.500h3l2 2 2-2h4M16 25.500h3l2-2 2 2h4M21.500 3v21" fill="none" stroke="#444" strokeWidth="2.200" /></svg>
        <svg width="31" height="24" viewBox="0 0 31 24"><rect x="1" y="1" width="29" height="22" fill="url(#desk)" stroke="#c6d4ea" strokeWidth="1.500" /><path d="M2 19h27v3H2z" fill="#2c3a50" /><circle cx="5" cy="20" r="2.500" fill="#4fb5e8" /><path d="M4 19h2v1H4z" fill="#f36" /></svg>
        <Globe className="size-8" />
        <svg width="30" height="32" viewBox="0 0 31 32">
          <path d="M2 12h27l-1 17-25 2z" fill="#fff" stroke="#222" strokeWidth="1.500" />
          <path d="M1 7L27 1l1 4L2 11z" fill="#fff" stroke="#111" />
          <path d="M5 6l4-1 1 4-4 1zM13 4l4-1 2 4-4 1zM21 2l4-1 2 4-4 1zM3 11h5l-2 3H3zM12 11h5l-2 3h-5zM21 11h5l-2 3h-5z" fill="#111" />
          <text x="4" y="26" fontFamily="Open Sans, sans-serif" fontWeight="800" fontSize="13"><tspan fill="#e0562a">3</tspan><tspan fill="#2f8ae0">2</tspan><tspan fill="#3aa52c">1</tspan></text>
        </svg>
        <svg width="32" height="30" viewBox="0 0 32 30">
          <path d="M31 9Q28 1 20 1 8 1 6 13q0 15 14 16 9 0 11-7l-6-4q-4 5-9 1-3-4-1-9 4-5 8 0z" fill="#dc3a2c" />
          <path d="M18 3l3 1-5 12-4-2z" fill="#2c7ec8" />
          <path d="M10 13l10 4-2 4-10-4z" fill="#2f86d0" />
          <path d="M8 16l9 5-6 8Q4 28 0 23z" fill="#f4d3a0" stroke="#d8a868" strokeWidth=".7" />
        </svg>
      </div>
      <div className="flex h-[38px] items-center justify-self-end border border-b-[#efe9e4] border-l-[#9b7b63] border-r-[#efe9e4] border-t-[#9b7b63] pl-[5px] pr-px">
        <div className="flex items-center gap-2">
          <svg width="17" height="17" viewBox="0 0 17 17"><circle cx="8.500" cy="8.500" r="8" fill="#f5b04a" stroke="#8f7f70" strokeWidth=".7" /><path d="M1 10q5-5 8-1 4 3 7 0-1 7-7.500 7T1 10z" fill="#5a78b0" /></svg>
          <svg width="16" height="17" viewBox="0 0 16 17"><path d="M5 1h9v15H5z" fill="#8fd0f5" stroke="#4c9ed0" /><path d="M6 4h3v3H6z" fill="#e64" /><path d="M10 4h3v3h-3z" fill="#5b5" /><path d="M7 8h3v3H7z" fill="#36c" /><path d="M1 10q-1-4 5-4M2 12q6 1 11-4" fill="none" stroke="#f0a030" strokeWidth="1.500" /></svg>
          <svg width="17" height="17" viewBox="0 0 17 17"><path d="M2 0h5v4H2z" fill="#eee" stroke="#777" /><path d="M0 4h9v6l-3 5H4L1 11z" fill="#666" /><circle cx="11.500" cy="11.500" r="5" fill="#25a022" /><path d="M9 11.500l2 2.500 3-5" fill="none" stroke="#fff" strokeWidth="1.600" /></svg>
          <svg width="16" height="17" viewBox="0 0 16 17"><path d="M1 .500h2v16H1z" fill="#fff" stroke="#555" strokeWidth=".7" /><path d="M3 2q4-2 6 1l6 1-2 4 2 2q-4 1-6-2H3z" fill="#fff" stroke="#555" /></svg>
          <svg width="16" height="14" viewBox="0 0 16 14"><path d="M.500 10.500h2v3h-2zM3.500 8.500h2v5h-2zM6.500 5.500h2v8h-2zM9.500 3.500h2v10h-2zM12.500 .500h2.500v13h-2.500z" fill="#fff" stroke="#666" /></svg>
          <svg width="17" height="17" viewBox="0 0 17 17"><path d="M1 6h3l4-5v15l-4-5H1z" fill="#fff" stroke="#555" /><path d="M10.500 5.500q2 3 0 6M12.500 3q4 5.500 0 11" fill="none" stroke="#777" strokeWidth="1.300" /></svg>
        </div>
        <div className="ml-2 text-center leading-[17px]">
          <div>19:16</div>
          <div>16.8.2017</div>
        </div>
        <svg width="16" height="13" viewBox="0 0 16 13" className="ml-[3px]"><path d="M.500 .500h15v12H.500z" fill="url(#desk)" stroke="#6f92c8" /><path d="M1 10h14v2H1z" fill="#24344f" /><path d="M1 9h3v3H1z" fill="#5cc0ee" /></svg>
      </div>
    </footer>
  );
}

export default function App() {
  return (
    <div className="flex h-screen flex-col overflow-hidden">
      <svg width="0" height="0" className="absolute">
        <defs>
          <radialGradient id="faceYellow" cx=".35" cy=".3" r=".8"><stop offset="0" stopColor="#fff04a" /><stop offset=".55" stopColor="#ffc61e" /><stop offset="1" stopColor="#f08a0a" /></radialGradient>
          <radialGradient id="faceRed" cx=".35" cy=".3" r=".8"><stop offset="0" stopColor="#ff9a2a" /><stop offset="1" stopColor="#e2520e" /></radialGradient>
          <radialGradient id="faceGreen" cx=".35" cy=".3" r=".8"><stop offset="0" stopColor="#2ee08a" /><stop offset="1" stopColor="#078a52" /></radialGradient>
          <radialGradient id="globe" cx=".65" cy=".4" r=".75"><stop offset="0" stopColor="#a9c6f0" /><stop offset=".5" stopColor="#5b88d4" /><stop offset="1" stopColor="#173064" /></radialGradient>
          <linearGradient id="desk" x1="0" y1="0" x2="1" y2="1"><stop offset="0" stopColor="#2450c0" /><stop offset=".5" stopColor="#3f7ce8" /><stop offset="1" stopColor="#7aacf8" /></linearGradient>
        </defs>
      </svg>
      <TitleBar />
      <BrowserToolbar />
      <div className="flex min-h-0 flex-1">
        <div className="min-w-0 flex-1 overflow-hidden bg-linear-to-b from-[#fbfbfb] to-[#828282]">
          <ForumPage />
        </div>
        <PageScrollbar />
      </div>
      <div className={`h-[22px] shrink-0 border-b border-t border-b-[#e6ded8] border-t-[#9a8a7c] bg-[#c9b9aa] pl-[3px] text-[12px] leading-5 text-black ${TAHOMA}`}>Hotovo</div>
      <Taskbar />
    </div>
  );
}
